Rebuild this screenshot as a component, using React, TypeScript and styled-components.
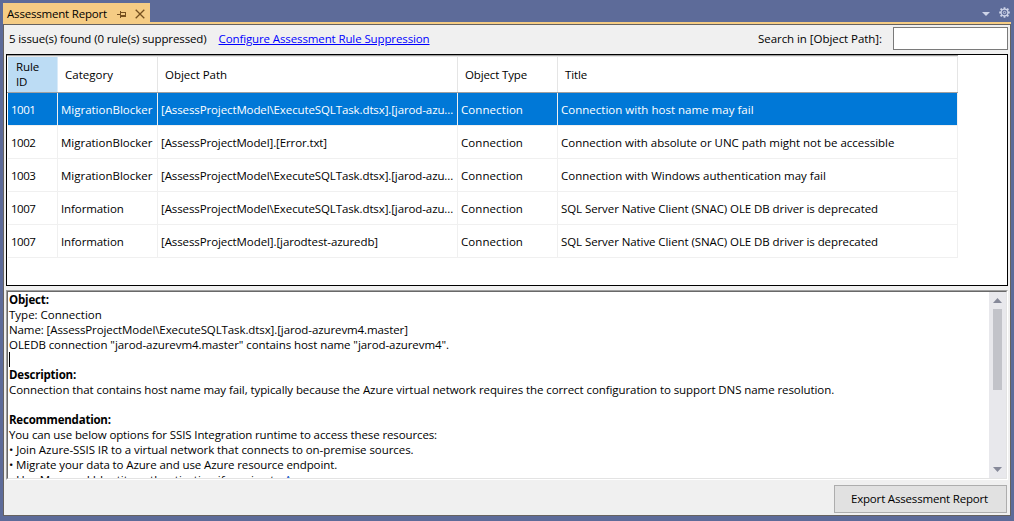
import React from 'react';
import styled, { createGlobalStyle } from 'styled-components';

const Global = createGlobalStyle`
  body { margin: 0; overflow: hidden; }
  * { box-sizing: border-box; }
`;

const Shell = styled.div`
  width: 1014px;
  height: 521px;
  padding: 3px 3px 5px;
  display: flex;
  flex-direction: column;
  background: #5d6b99;
  font-family: 'Open Sans', 'Segoe UI', sans-serif;
  font-size: 11.5px;
  color: #000;
`;

const TabStrip = styled.div`
  height: 19px;
  display: flex;
  justify-content: space-between;
  flex: none;
`;

const Tab = styled.div`
  width: 147px;
  padding: 2px 6px 0 4px;
  display: flex;
  align-items: center;
  background: #f5cc84;
  line-height: 20px;
`;

const PinIcon = styled.svg`
  width: 9px;
  height: 9px;
  margin: 1px 9px 0 10px;
  flex: none;
`;

const CloseIcon = styled.svg`
  width: 10px;
  height: 10px;
  margin-top: 1px;
  flex: none;
`;

const StripActions = styled.div`
  display: flex;
  gap: 9px;
  padding: 4px 1px 0 0;
`;

const Caret = styled.svg`
  width: 8px;
  height: 4px;
  margin-top: 5px;
`;

const Gear = styled.svg`
  width: 11px;
  height: 11px;
`;

const Panel = styled.div`
  width: 1008px;
  height: 494px;
  border-top: 2px solid #f5cc84;
  background: #f0f0f0;
`;

const PanelBody = styled.div`
  height: 492px;
  border: 1px solid #66625f;
  padding: 2px 2px 2px;
  display: flex;
  flex-direction: column;
`;

const Toolbar = styled.div`
  height: 27px;
  flex: none;
  display: flex;
  align-items: flex-start;
  padding-left: 3px;
  line-height: 23px;
`;

const Text = styled.span<{ $track?: number }>`
  letter-spacing: ${(p) => p.$track ?? 0}px;
  white-space: pre;
`;

const Link = styled(Text)`
  margin-left: 12px;
  color: #0000ff;
  text-decoration: underline;
  text-underline-offset: 1px;
`;

const SearchLabel = styled(Text)`
  margin-left: auto;
  margin-right: 11px;
`;

const SearchInput = styled.input`
  width: 115px;
  height: 23px;
  border: 1px solid #7a7a7a;
  border-radius: 0;
  background: #fff;
  outline: none;
`;

const GridFrame = styled.div`
  width: 1002px;
  height: 232px;
  flex: none;
  border: 1px solid #000;
  background: #fff;
`;

const columns = '50px 100px 300px 100px 400px';

const HeaderRow = styled.div`
  width: 951px;
  height: 38px;
  display: grid;
  grid-template-columns: ${columns};
  padding-left: 1px;
  border-top: 1px solid #a0a0a0;
  border-bottom: 1px solid #a0a0a0;
`;

const HeaderCell = styled.div<{ $active?: boolean }>`
  display: flex;
  align-items: center;
  padding: 0 7px ${(p) => (p.$active ? '2px 8px' : '0 7px')};
  line-height: 15px;
  border-top: 1px solid #e8e8e8;
  border-right: 1px solid ${(p) => (p.$active ? '#d9ebf9' : '#e5e5e5')};
  background: ${(p) => (p.$active ? '#bcdcf4' : '#fff')};
`;

const Row = styled.div<{ $selected?: boolean }>`
  width: 951px;
  height: 33px;
  padding-left: 1px;
  display: grid;
  grid-template-columns: ${columns};
  color: ${(p) => (p.$selected ? '#fff' : '#000')};
  & > div {
    background: ${(p) => (p.$selected ? '#0078d7' : '#fff')};
  }
`;

const Cell = styled.div`
  padding-left: 3px;
  line-height: 34px;
  overflow: hidden;
  border-right: 1px solid #f0f0f0;
  border-bottom: 1px solid #f0f0f0;
`;

const Details = styled.div`
  width: 1002px;
  height: 190px;
  margin-top: 4px;
  flex: none;
  display: flex;
  border: 1px solid;
  border-color: #a0a0a0 #fff #fff #a0a0a0;
`;

const DetailsInner = styled.div`
  flex: 1;
  display: flex;
  border: 1px solid;
  border-color: #696969 #e3e3e3 #e3e3e3 #696969;
  background: #fff;
  overflow: hidden;
`;

const Document = styled.div`
  flex: 1;
  height: 186px;
  padding-left: 1px;
  overflow: hidden;
`;

const Line = styled.div<{ $bold?: boolean }>`
  height: 15px;
  line-height: 15px;
  font-weight: ${(p) => (p.$bold ? 700 : 400)};
`;

const TextCursor = styled.div`
  width: 1px;
  height: 15px;
  background: #000;
`;

const DocLink = styled.span`
  color: #0b4fc4;
`;

const ScrollBar = styled.div`
  width: 17px;
  display: flex;
  flex-direction: column;
  align-items: center;
  background: #e8e8ec;
`;

const ScrollArrow = styled.svg`
  width: 9px;
  height: 5px;
  margin: 6px 0;
  flex: none;
`;

const ScrollThumb = styled.div`
  width: 9px;
  height: 81px;
  margin-bottom: auto;
  background: #c2c3c9;
`;

const ExportButton = styled.button`
  width: 173px;
  height: 28px;
  margin: 5px 1px 0 auto;
  padding: 0 2px 1px 0;
  flex: none;
  border: 1px solid #adadad;
  background: #e1e1e1;
  font: inherit;
  color: #000;
`;

type Label = [string, number];

const headers: Label[] = [
  ['Rule\nID', -0.13],
  ['Category', 0.02],
  ['Object Path', -0.04],
  ['Object Type', -0.14],
  ['Title', -0.14],
];

const blocker: Label = ['MigrationBlocker', -0.01];
const info: Label = ['Information', -0.1];
const taskPath: Label = ['[AssessProjectModel\\ExecuteSQLTask.dtsx].[jarod-azu...', -0.11];
const connection: Label = ['Connection', 0.08];
const snac: Label = ['SQL Server Native Client (SNAC) OLE DB driver is deprecated', -0.083];

const rows: Label[][] = [
  [['1001', -0.5], blocker, taskPath, connection, ['Connection with host name may fail', 0.015]],
  [['1002', -0.5], blocker, ['[AssessProjectModel].[Error.txt]', -0.11], connection, ['Connection with absolute or UNC path might not be accessible', -0.018]],
  [['1003', -0.5], blocker, taskPath, connection, ['Connection with Windows authentication may fail', 0]],
  [['1007', -0.5], info, taskPath, connection, snac],
  [['1007', -0.5], info, ['[AssessProjectModel].[jarodtest-azuredb]', -0.093], connection, snac],
];

export default function App() {
  return (
    <>
      <Global />
      <Shell>
        <TabStrip>
          <Tab>
            <Text $track={-0.188}>Assessment Report</Text>
            <PinIcon viewBox="0 0 9 9" fill="none" stroke="#75501f" shapeRendering="crispEdges">
              <path d="M0 4.5H3M3.5 1V8M4 2.5H8.5V6.5M4 5.5H8M4 6.5H9" />
            </PinIcon>
            <CloseIcon viewBox="0 0 10 10" fill="none" stroke="#75501f" strokeWidth="1.3">
              <path d="M0.7 0.7L9.3 9.3M9.3 0.7L0.7 9.3" />
            </CloseIcon>
          </Tab>
          <StripActions>
            <Caret viewBox="0 0 8 4" fill="#ced4e8">
              <path d="M0 0H8L4 4Z" />
            </Caret>
            <Gear viewBox="0 0 11 11" fill="none" stroke="#ced4e8">
              <circle cx="5.5" cy="5.5" r="3.4" strokeWidth="1.3" />
              <circle cx="5.5" cy="5.5" r="1.2" strokeWidth="0.9" />
              <path strokeWidth="1.8" d="M5.5 0.2V2M5.5 9V10.8M0.2 5.5H2M9 5.5H10.8M1.6 1.6L3 3M8 8L9.4 9.4M9.4 1.6L8 3M3 8L1.6 9.4" />
            </Gear>
          </StripActions>
        </TabStrip>
        <Panel>
          <PanelBody>
            <Toolbar>
              <Text $track={-0.115}>5 issue(s) found (0 rule(s) suppressed)</Text>
              <Link $track={-0.115}>Configure Assessment Rule Suppression</Link>
              <SearchLabel $track={-0.054}>Search in [Object Path]:</SearchLabel>
              <SearchInput aria-label="Search in Object Path" />
            </Toolbar>
            <GridFrame>
              <HeaderRow>
                {headers.map(([text, track], i) => (
                  <HeaderCell key={text} $active={i === 0}>
                    <Text $track={track}>{text}</Text>
                  </HeaderCell>
                ))}
              </HeaderRow>
              {rows.map((cells, r) => (
                <Row key={r} $selected={r === 0}>
                  {cells.map(([text, track], c) => (
                    <Cell key={c}>
                      <Text $track={track}>{text}</Text>
                    </Cell>
                  ))}
                </Row>
              ))}
            </GridFrame>
            <Details>
              <DetailsInner>
                <Document>
                  <Line $bold><Text $track={-0.16}>Object:</Text></Line>
                  <Line><Text $track={0}>Type: Connection</Text></Line>
                  <Line><Text $track={-0.1}>{'Name: [AssessProjectModel\\ExecuteSQLTask.dtsx].[jarod-azurevm4.master]'}</Text></Line>
                  <Line><Text $track={-0.07}>OLEDB connection "jarod-azurevm4.master" contains host name "jarod-azurevm4".</Text></Line>
                  <Line><TextCursor /></Line>
                  <Line $bold><Text $track={-0.2}>Description:</Text></Line>
                  <Line><Text $track={-0.081}>Connection that contains host name may fail, typically because the Azure virtual network requires the correct configuration to support DNS name resolution.</Text></Line>
                  <Line />
                  <Line $bold><Text $track={-0.22}>Recommendation:</Text></Line>
                  <Line><Text $track={-0.119}>You can use below options for SSIS Integration runtime to access these resources:</Text></Line>
                  <Line><Text $track={-0.06}>• Join Azure-SSIS IR to a virtual network that connects to on-premise sources.</Text></Line>
                  <Line><Text $track={-0.11}>• Migrate your data to Azure and use Azure resource endpoint.</Text></Line>
                  <Line><Text $track={0.02}>• Use Managed Identity authentication if moving to <DocLink>Azure</DocLink></Text></Line>
                </Document>
                <ScrollBar>
                  <ScrollArrow viewBox="0 0 9 5" fill="#868999"><path d="M0 5L4.5 0L9 5Z" /></ScrollArrow>
                  <ScrollThumb />
                  <ScrollArrow viewBox="0 0 9 5" fill="#868999"><path d="M0 0H9L4.5 5Z" /></ScrollArrow>
                </ScrollBar>
              </DetailsInner>
            </Details>
            <ExportButton><Text $track={-0.18}>Export Assessment Report</Text></ExportButton>
          </PanelBody>
        </Panel>
      </Shell>
    </>
  );
}
